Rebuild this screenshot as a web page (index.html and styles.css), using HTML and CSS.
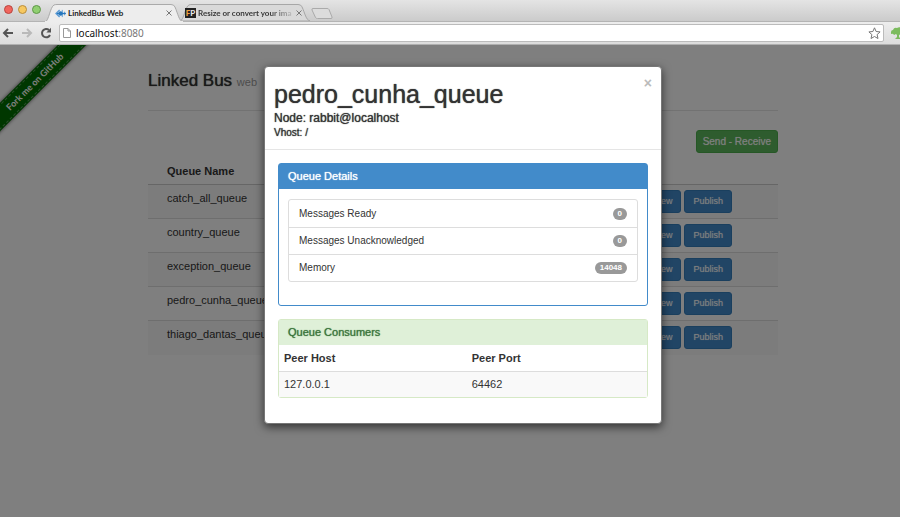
FILE: index.html
```html
<!DOCTYPE html>
<html lang="en">
<head>
<meta charset="utf-8">
<title>LinkedBus Web</title>
<link rel="stylesheet" href="styles.css">
</head>
<body>
<div class="window">
  <header class="chrome">
    <div class="tabstrip">
      <div class="lights">
        <span class="light red"></span><span class="light amber"></span><span class="light green"></span>
      </div>
      <div class="tab active">
        <svg class="tab-shape" viewBox="0 0 138 18" preserveAspectRatio="none" aria-hidden="true"><path d="M0 18C4 17 5 3 9 1Q10 .5 12 .5H126Q129 .5 130 3C133 10 134 17 138 18Z" fill="#ededed" stroke="#aaa"/><path d="M0 18H138" stroke="#ededed" stroke-width="2"/></svg>
        <svg class="favicon" viewBox="0 0 12 10" aria-hidden="true"><path d="M5 1 1 5l4 4" fill="none" stroke="#5b9bd5" stroke-width="1.500"/><path d="M8 1v8M10.500 3v4" stroke="#5b9bd5" stroke-width="1"/><path d="M2 5h10" stroke="#2677bd" stroke-width="1.500"/><circle cx="6" cy="5" r="2.500" fill="#2677bd"/></svg>
        <span class="tab-title">LinkedBus Web</span>
        <button class="tab-close" aria-label="Close tab"><svg viewBox="0 0 6 6"><path d="M.5.5l5 5m0-5l-5 5"/></svg></button>
      </div>
      <div class="tab">
        <svg class="tab-shape" viewBox="0 0 130 18" preserveAspectRatio="none" aria-hidden="true"><path d="M0 18C4 17 5 3 9 1Q10 .5 12 .5H118Q121 .5 122 3C125 10 126 17 130 18Z" fill="#d9d9d9" stroke="#a4a4a4"/></svg>
        <span class="fp"><b>F</b>P</span>
        <span class="tab-title fade">Resize or convert your ima</span>
        <button class="tab-close" aria-label="Close tab"><svg viewBox="0 0 6 6"><path d="M.5.5l5 5m0-5l-5 5"/></svg></button>
      </div>
      <button class="new-tab" aria-label="New tab"><svg viewBox="0 0 22 11"><path d="M2 .5h14q1.500 0 2 1l3 7.500q.5 1.500-1 1.500H6.500q-1.500 0-2-1L1 2Q.5.5 2 .5Z" fill="#dcdcdc" stroke="#aaa"/></svg></button>
    </div>
    <div class="toolbar">
      <button class="nav" aria-label="Back"><svg viewBox="0 0 12 12"><path d="M11 6H2M6 2L2 6l4 4" stroke="#555"/></svg></button>
      <button class="nav" aria-label="Forward"><svg viewBox="0 0 12 12"><path d="M1 6h9M6 2l4 4-4 4" stroke="#b9b9b9"/></svg></button>
      <button class="nav" aria-label="Reload"><svg viewBox="0 0 12 12"><path d="M10 8A4.200 4.200 0 1 1 9 3" stroke="#555"/><path class="head" d="M11 .8V5.500H6.300Z"/></svg></button>
      <div class="omnibox">
        <svg class="doc" viewBox="0 0 8 10" aria-hidden="true"><path d="M.5.5h4.500L7.500 3v6.500h-7ZM5 .5V3h2.500" fill="#fff" stroke="#999"/></svg>
        <div class="url" role="textbox" aria-label="Address" contenteditable="true" spellcheck="false">localhost<span>:8080</span></div>
        <button class="star" aria-label="Bookmark"><svg viewBox="0 0 13 12"><path d="M6.500.8l1.600 3.700 4 .4-3 2.700.9 3.900-3.500-2-3.500 2 .9-3.900-3-2.700 4-.4Z" fill="#fff" stroke="#777"/></svg></button>
      </div>
      <button class="extension" aria-label="Extension"><svg viewBox="0 0 14 12"><path d="M0 5q0-2 2-2 1-3 4-2 3-2 5 1 3 0 3 3-1 2-4 2L8 8v2l2 2H4l2-2V8L5 7 3 8Q2 6 0 7Z" fill="#7cbb5e"/></svg></button>
    </div>
  </header>

  <main class="viewport">
    <a class="ribbon" href="#github">Fork me on GitHub</a>
    <div class="container">
      <h1 class="page-title">Linked Bus <small>web</small></h1>
      <div class="actions"><button class="btn success">Send - Receive</button></div>
      <table class="queues">
        <thead><tr><th>Queue Name</th><th></th></tr></thead>
        <tbody>
          <tr><td>catch_all_queue</td><td class="ops"><div><button class="btn primary">View</button><button class="btn primary">Publish</button></div></td></tr>
          <tr><td>country_queue</td><td class="ops"><div><button class="btn primary">View</button><button class="btn primary">Publish</button></div></td></tr>
          <tr><td>exception_queue</td><td class="ops"><div><button class="btn primary">View</button><button class="btn primary">Publish</button></div></td></tr>
          <tr><td>pedro_cunha_queue</td><td class="ops"><div><button class="btn primary">View</button><button class="btn primary">Publish</button></div></td></tr>
          <tr><td>thiago_dantas_queue</td><td class="ops"><div><button class="btn primary">View</button><button class="btn primary">Publish</button></div></td></tr>
        </tbody>
      </table>
    </div>

    <div class="backdrop">
      <section class="modal" role="dialog" aria-labelledby="queue-title">
        <header class="modal-header">
          <div>
            <h2 id="queue-title">pedro_cunha_queue</h2>
            <h3>Node: rabbit@localhost</h3>
            <h4>Vhost: /</h4>
          </div>
          <button class="close" aria-label="Close">×</button>
        </header>
        <div class="modal-body">
          <section class="panel details">
            <h5>Queue Details</h5>
            <ul>
              <li>Messages Ready <span class="badge">0</span></li>
              <li>Messages Unacknowledged <span class="badge">0</span></li>
              <li>Memory <span class="badge">14048</span></li>
            </ul>
          </section>
          <section class="panel consumers">
            <h5>Queue Consumers</h5>
            <table>
              <thead><tr><th>Peer Host</th><th>Peer Port</th></tr></thead>
              <tbody><tr><td>127.0.0.1</td><td>64462</td></tr></tbody>
            </table>
          </section>
        </div>
      </section>
    </div>
  </main>
</div>
</body>
</html>
```
FILE: styles.css
```css
* { box-sizing: border-box; }
body {
  margin: 0;
  font: 11px/16px "Liberation Sans", Arial, sans-serif;
  color: #333;
}
h1, h2, h3, h4, h5, ul { margin: 0; padding: 0; font-weight: 400; }
button { font: inherit; color: inherit; border: 0; padding: 0; background: none; }
svg { display: block; }
.window { min-height: 100vh; display: flex; flex-direction: column; }

/* Browser frame */
.tabstrip {
  display: flex;
  align-items: flex-end;
  height: 22px;
  background: linear-gradient(#e4e4e4, #cbcbcb);
  border-bottom: 1px solid #b4b4b4;
}
.lights { display: flex; gap: 5px; padding: 0 4px 7px 4px; }
.light { width: 9px; height: 9px; border-radius: 50%; border: 1px solid; }
.red { background: #f1655d; border-color: #b8453f; }
.amber { background: #f6c860; border-color: #b98d3c; }
.green { background: #90cf70; border-color: #5e9748; }
.tab {
  position: relative;
  display: flex;
  align-items: center;
  gap: 2px;
  width: 130px;
  height: 17px;
  padding: 0 8px 0 5px;
  font: 700 8px/10px Lato, sans-serif;
  color: #333;
}
.tab > * { position: relative; }
.tab.active { width: 138px; z-index: 1; margin: 0 -3px -1px 0; height: 18px; padding: 0 11px 0 10px; color: #222; }
.tab .tab-shape { position: absolute; left: 0; top: 0; width: 100%; height: 100%; }
.favicon { width: 11px; height: 9px; }
.tab-title { flex: 1; white-space: nowrap; overflow: hidden; }
.fade { color: transparent; background: linear-gradient(90deg, #333 75%, #ccc); background-clip: text; -webkit-background-clip: text; }
.fp { width: 11px; background: #222; color: #eee; text-align: center; }
.fp b { color: #f0a040; }
.tab-close { width: 6px; height: 6px; }
.tab-close path { stroke: #777; fill: none; }
.new-tab { width: 22px; height: 11px; margin: 0 0 2px 1px; }
.toolbar {
  display: flex;
  align-items: center;
  gap: 7px;
  height: 23px;
  padding: 0 0 0 2px;
  background: linear-gradient(#ededed, #dcdcdc);
  border-bottom: 1px solid #b0b0b0;
}
.nav { width: 12px; height: 12px; }
.nav path { stroke-width: 2; fill: none; }
.nav .head { fill: #555; }
.omnibox {
  flex: 1;
  display: flex;
  align-items: center;
  gap: 5px;
  height: 18px;
  padding: 0 2px 0 3px;
  background: #fff;
  border: 1px solid #bbb;
  border-radius: 2px;
}
.doc { width: 8px; height: 10px; }
.url { flex: 1; font: 10px/16px "Noto Sans", sans-serif; color: #111; }
.url span { color: #777; }
.star { width: 13px; height: 12px; }
.extension { width: 9px; height: 12px; overflow: hidden; }
.extension svg { width: 14px; height: 12px; }

/* Page behind the dialog */
.viewport { position: relative; flex: 1; overflow: hidden; padding-left: 26px; background: #fff; }
.container { max-width: 630px; margin: 0 auto; }
.page-title {
  padding: 26px 0 18px;
  border-bottom: 1px solid #e5e5e5;
  font-size: 17px;
  line-height: 20px;
  text-shadow: 0 0 1px #333;
}
.page-title small { font-size: 11px; color: #999; text-shadow: none; }
.actions { display: flex; justify-content: flex-end; padding: 19px 0 8px; }
.btn {
  padding: 3px 8px;
  border: 1px solid;
  border-radius: 3px;
  font-size: 9px;
  line-height: 15px;
  color: #fff;
  text-shadow: 0 0 1px rgba(255, 255, 255, 0.6);
}
.success { background: #5cb85c; border-color: #4cae4c; font-size: 10px; padding: 3px 6px; }
.primary { background: #428bca; border-color: #357ebd; }
.queues { width: 100%; border-collapse: collapse; text-align: left; }
.queues th { padding: 2px 19px 5px; border-bottom: 1px solid #ccc; }
.queues td { height: 34px; padding: 5px 19px; border-top: 1px solid #ddd; vertical-align: top; }
.queues tbody tr:nth-child(odd) { background: #f9f9f9; }
.queues .ops { padding: 5px 46px 5px 0; }
.ops div { display: flex; justify-content: flex-end; gap: 3px; }
.ribbon {
  position: absolute;
  left: -55px;
  top: 27px;
  width: 180px;
  height: 20px;
  background: #006f00;
  box-shadow: 0 0 4px #555;
  outline: 1px dashed #579a57;
  outline-offset: -2px;
  color: #fff;
  text-align: center;
  text-decoration: none;
  font: 700 9px/20px Lato, sans-serif;
  transform: rotate(-45deg);
}

/* Dialog */
.backdrop {
  position: absolute;
  inset: 0;
  padding: 21px 0 0 26px;
  background: rgba(0, 0, 0, 0.5);
}
.modal {
  max-width: 398px;
  margin: 0 auto;
  background: #fff;
  border: 1px solid #777;
  border-radius: 4px;
  box-shadow: 0 3px 10px rgba(0, 0, 0, 0.6);
}
.modal-header {
  display: flex;
  justify-content: space-between;
  align-items: flex-start;
  padding: 11px 9px 9px;
  border-bottom: 1px solid #e5e5e5;
}
.modal h2 { font-size: 25px; line-height: 32px; text-shadow: 0 0 1px #333; }
.modal h3 { font-size: 12px; line-height: 16px; text-shadow: 0 0 1px #333; }
.modal h4 { font-size: 10px; line-height: 14px; text-shadow: 0 0 1px #333; }
.close { color: #bbb; font-size: 14px; line-height: 10px; font-weight: 700; }
.modal-body { display: grid; gap: 13px; padding: 13px 13px 25px; }
.panel { border: 1px solid #428bca; border-radius: 3px; }
.panel h5 { padding: 5px 9px; font-size: 11px; line-height: 15px; }
.details { padding-bottom: 23px; }
.details h5 { background: #428bca; color: #fff; text-shadow: 0 0 1px #fff; }
.details ul { margin: 10px 9px 0; border: 1px solid #ddd; border-radius: 3px; list-style: none; }
.details li {
  display: flex;
  justify-content: space-between;
  align-items: center;
  height: 27px;
  padding: 0 10px;
  font-size: 10px;
}
.details li + li { border-top: 1px solid #ddd; }
.badge {
  padding: 0 5px;
  border-radius: 6px;
  background: #999;
  color: #fff;
  font-size: 8px;
  line-height: 12px;
  font-weight: 700;
}
.consumers { border-color: #d6e9c6; }
.consumers h5 { background: #dff0d8; color: #3c763d; text-shadow: 0 0 1px #3c763d; }
.consumers table { width: 100%; border-collapse: collapse; table-layout: fixed; text-align: left; }
.consumers th, .consumers td { height: 26px; padding: 0 5px; }
.consumers th:first-child { width: 51%; }
.consumers th { border-bottom: 1px solid #ddd; }
.consumers td { background: #f9f9f9; }
```
